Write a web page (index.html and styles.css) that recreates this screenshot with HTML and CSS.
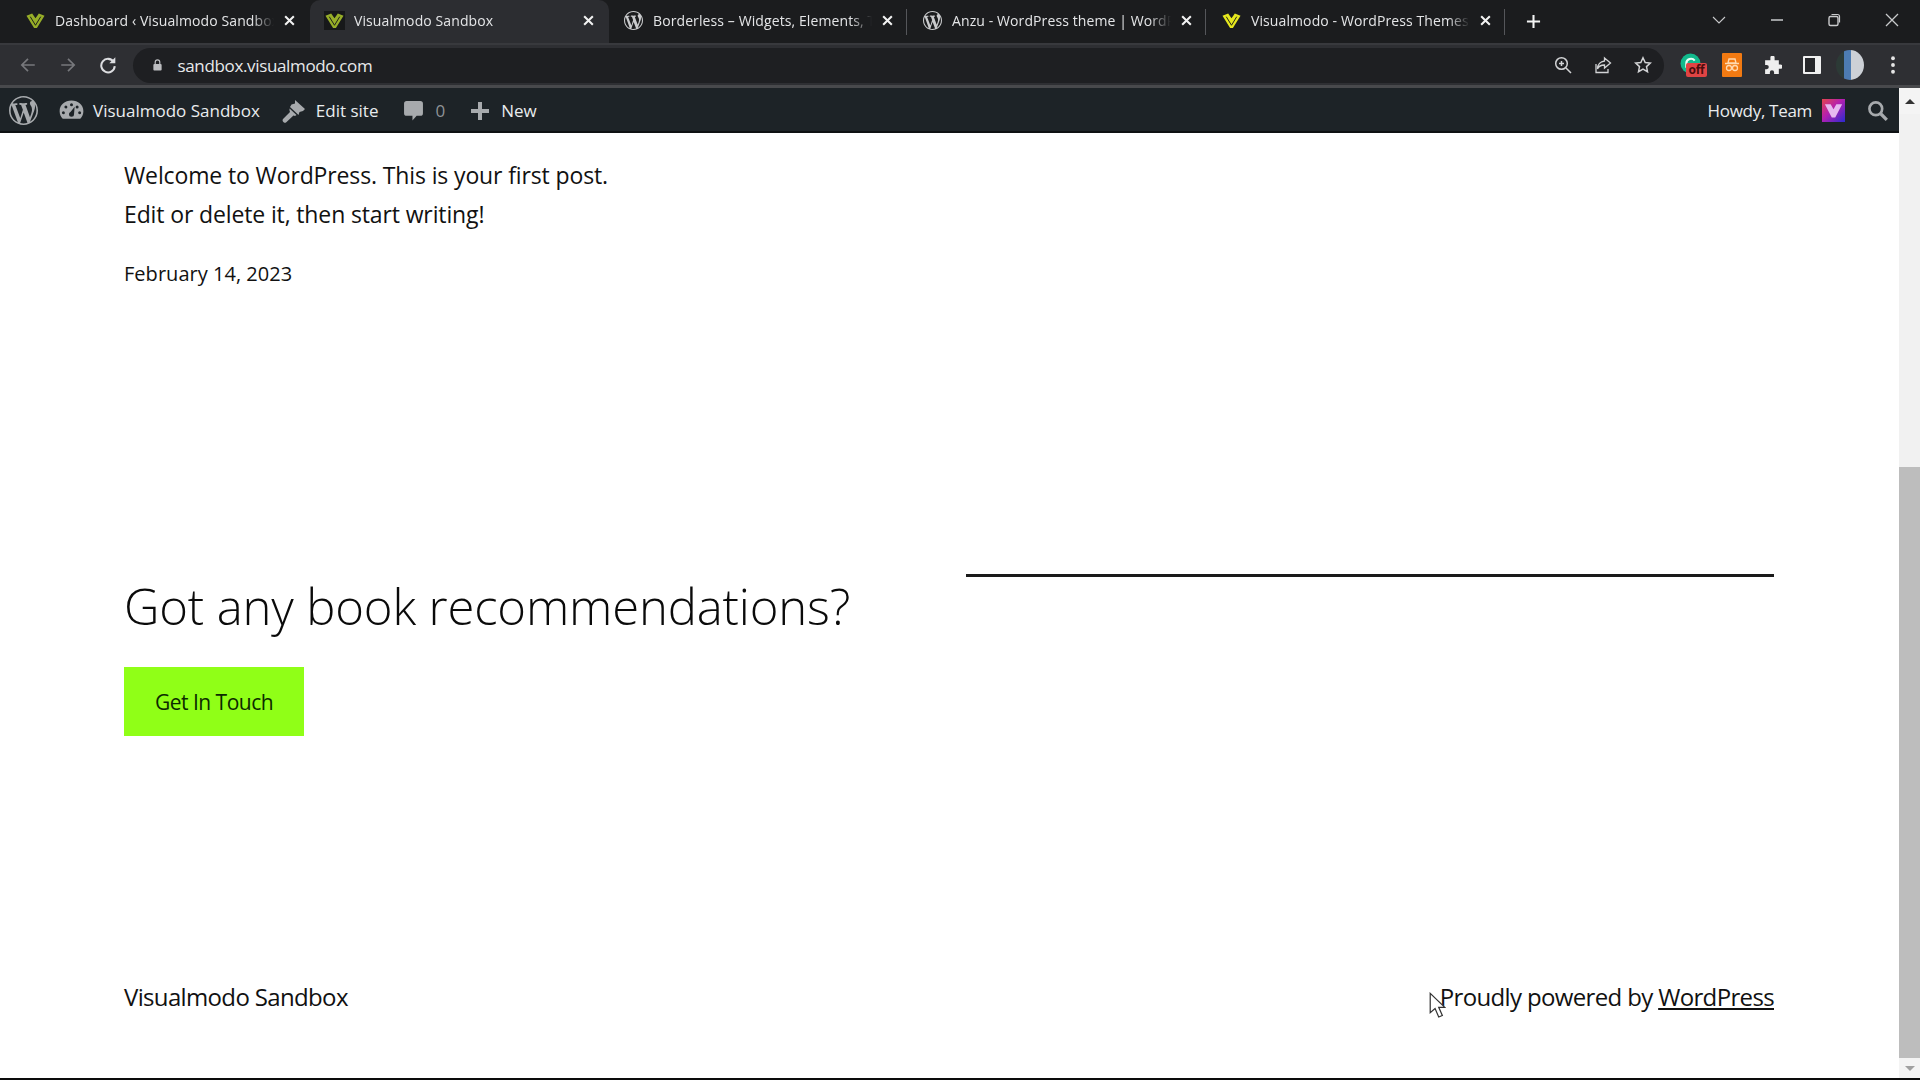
FILE: index.html
```html
<!DOCTYPE html>
<html lang="en">
<head>
<meta charset="utf-8">
<title>Visualmodo Sandbox</title>
<link rel="stylesheet" href="styles.css">
</head>
<body>
<svg class="defs" width="0" height="0" aria-hidden="true">
  <defs>
    <symbol id="wp" viewBox="0 0 20 20"><path d="M20 10c0-5.51-4.49-10-10-10C4.48 0 0 4.49 0 10c0 5.52 4.48 10 10 10 5.51 0 10-4.48 10-10zM7.78 15.37L4.37 6.22c.55-.02 1.17-.08 1.17-.08.5-.06.44-1.13-.06-1.11 0 0-1.45.11-2.37.11-.18 0-.37 0-.58-.01C4.12 2.69 6.87 1.11 10 1.11c2.33 0 4.45.87 6.05 2.34-.68-.11-1.65.39-1.65 1.58 0 .74.45 1.36.9 2.1.35.61.55 1.36.55 2.46 0 1.49-1.4 5-1.4 5l-3.03-8.37c.54-.02.82-.17.82-.17.5-.05.44-1.25-.06-1.22 0 0-1.44.12-2.38.12-.87 0-2.33-.12-2.33-.12-.5-.03-.56 1.2-.06 1.22l.92.08 1.26 3.41zM17.41 10c.24-.64.74-1.87.43-4.25.7 1.29 1.05 2.71 1.05 4.25 0 3.29-1.73 6.24-4.4 7.78.97-2.59 1.94-5.2 2.92-7.78zM6.1 18.09C3.12 16.65 1.11 13.53 1.11 10c0-1.3.23-2.48.72-3.59C3.25 10.3 4.67 14.2 6.1 18.09zm4.03-6.63l2.58 6.98c-.86.29-1.76.45-2.71.45-.79 0-1.57-.11-2.29-.33.81-2.38 1.62-4.74 2.42-7.1z" fill="currentColor"/></symbol>
    <symbol id="vm" viewBox="0 0 20 20"><path d="M0.500 5L6.500 2.500 10 7.500 13.500 2.500 19.500 5 11.500 18H8.500z" fill="currentColor"/><path d="M4.500 6L10 15 15.500 6" stroke="#17181a" stroke-width="1" fill="none"/></symbol>
    <symbol id="close" viewBox="0 0 12 12"><path d="M2 2l8 8M10 2l-8 8" stroke="currentColor" stroke-width="1.9" fill="none"/></symbol>
  </defs>
</svg>

<header class="tabstrip">
  <div class="tab">
    <svg class="favicon fav-olive"><use href="#vm"/></svg>
    <span class="tab-title">Dashboard ‹ Visualmodo Sandbox</span>
    <svg class="tab-close"><use href="#close"/></svg>
  </div>
  <div class="tab tab-active">
    <svg class="favicon fav-olive fav-box"><use href="#vm"/></svg>
    <span class="tab-title">Visualmodo Sandbox</span>
    <svg class="tab-close"><use href="#close"/></svg>
  </div>
  <div class="tab">
    <svg class="favicon fav-wp"><use href="#wp"/></svg>
    <span class="tab-title">Borderless – Widgets, Elements, T</span>
    <svg class="tab-close"><use href="#close"/></svg>
  </div>
  <div class="tab tab-sep">
    <svg class="favicon fav-wp"><use href="#wp"/></svg>
    <span class="tab-title">Anzu - WordPress theme | WordP</span>
    <svg class="tab-close"><use href="#close"/></svg>
  </div>
  <div class="tab tab-sep tab-last">
    <svg class="favicon fav-yellow"><use href="#vm"/></svg>
    <span class="tab-title">Visualmodo - WordPress Themes</span>
    <svg class="tab-close"><use href="#close"/></svg>
  </div>
  <svg class="new-tab" viewBox="0 0 16 16"><path d="M8 1v14M1 8h14" stroke="currentColor" stroke-width="2.200" fill="none"/></svg>
  <div class="window-controls">
    <svg class="win-icon" viewBox="0 0 16 16"><path d="M2 5l6 6 6-6" stroke="currentColor" stroke-width="1.100" fill="none"/></svg>
    <svg class="win-icon" viewBox="0 0 16 16"><path d="M2 8h12" stroke="currentColor" stroke-width="1.500" fill="none"/></svg>
    <svg class="win-icon" viewBox="0 0 16 16"><rect x="3" y="4.500" width="9" height="9" rx="1.500" stroke="currentColor" stroke-width="1.400" fill="none"/><path d="M5.500 2.500h6a2 2 0 0 1 2 2v6" stroke="currentColor" stroke-width="1.200" fill="none"/></svg>
    <svg class="win-icon" viewBox="0 0 16 16"><path d="M2 2l12 12M14 2L2 14" stroke="currentColor" stroke-width="1.300" fill="none"/></svg>
  </div>
</header>

<nav class="toolbar">
  <svg class="tool-icon tool-dim" viewBox="0 0 16 16"><path d="M14 8H2.500M8 2.500L2.500 8 8 13.500" stroke="currentColor" stroke-width="1.500" fill="none"/></svg>
  <svg class="tool-icon tool-dim" viewBox="0 0 16 16"><path d="M2 8h11.500M8 2.500L13.500 8 8 13.500" stroke="currentColor" stroke-width="1.500" fill="none"/></svg>
  <svg class="tool-icon" viewBox="0 0 16 16"><path d="M13 5.200A6 6 0 1 0 14 9" stroke="currentColor" stroke-width="1.800" fill="none"/><path d="M14.500 1.200v5.300H9.200z" fill="currentColor"/></svg>
  <div class="omnibox">
    <svg class="lock" viewBox="0 0 12 14"><path d="M3.500 6V4a2.500 2.500 0 0 1 5 0v2" stroke="currentColor" stroke-width="1.300" fill="none"/><rect x="1.500" y="6" width="9" height="7" rx="1" fill="currentColor"/></svg>
    <span class="url">sandbox.visualmodo.com</span>
    <div class="omni-actions">
      <svg class="omni-icon" viewBox="0 0 18 18"><circle cx="7.500" cy="7.500" r="5.800" stroke="currentColor" stroke-width="1.500" fill="none"/><path d="M12 12l5 5M5 7.500h5M7.500 5v5" stroke="currentColor" stroke-width="1.500" fill="none"/></svg>
      <svg class="omni-icon" viewBox="0 0 18 18"><path d="M10.500 2l6 5-6 5V9C7 9 4.500 10.500 3.500 13c0-4.500 3-7.500 7-8z" stroke="currentColor" stroke-width="1.300" fill="none"/><path d="M2 8v8.500h12V13" stroke="currentColor" stroke-width="1.300" fill="none"/></svg>
      <svg class="omni-icon" viewBox="0 0 18 18"><path d="M9 1.800l2.200 4.700 5.100.6-3.800 3.500 1 5.100L9 13.200l-4.500 2.500 1-5.100-3.800-3.500 5.100-.6z" stroke="currentColor" stroke-width="1.500" fill="none"/></svg>
    </div>
  </div>
  <div class="extensions">
    <div class="ext ext-green">
      <svg class="ext-ring" viewBox="0 0 20 20"><circle cx="10" cy="10" r="9.500" fill="#12b98c"/><path d="M6 14V10a4.500 4.500 0 0 1 8-2.800" stroke="#e6fff6" stroke-width="2" fill="none"/></svg>
      <span class="ext-off">off</span>
    </div>
    <div class="ext ext-orange">
      <svg viewBox="0 0 20 20" class="ext-glyph"><path d="M6 8l1-4h6l1 4zM3 8.500h14" stroke="#ffd9b0" stroke-width="1.400" fill="none"/><circle cx="7" cy="13" r="2.500" stroke="#ffd9b0" stroke-width="1.300" fill="none"/><circle cx="13" cy="13" r="2.500" stroke="#ffd9b0" stroke-width="1.300" fill="none"/></svg>
    </div>
    <svg class="ext-puzzle" viewBox="0 0 18 18"><path d="M7 1.500a2 2 0 0 1 4 0V4h4v4h1.500a2 2 0 0 1 0 4H15v5h-4.500v-1.500a2 2 0 0 0-4 0V17H2v-4.500h1.500a2 2 0 0 0 0-4H2V4h5z" fill="currentColor"/></svg>
    <div class="side-panel"><span class="side-panel-inner"></span></div>
    <div class="avatar"></div>
    <svg class="kebab" viewBox="0 0 4 16"><circle cx="2" cy="2" r="1.700"/><circle cx="2" cy="8" r="1.700"/><circle cx="2" cy="14" r="1.700"/></svg>
  </div>
</nav>

<div class="viewport">
  <div class="page">
    <div class="adminbar">
      <svg class="ab-wp"><use href="#wp"/></svg>
      <svg class="ab-dash" viewBox="0 0 20 20"><path fill-rule="evenodd" d="M3 16.500h14c1.500-1.500 2.500-3.500 2.500-6C19.500 5.500 15.300 2 10 2S.5 5.500.5 10.500c0 2.500 1 4.500 2.500 6zM10 4.200a1.200 1.200 0 1 1 0 2.400 1.200 1.200 0 0 1 0-2.400zM5.500 6a1.200 1.200 0 1 1 0 2.400A1.200 1.200 0 0 1 5.500 6zm9 0a1.200 1.200 0 1 1 0 2.400 1.200 1.200 0 0 1 0-2.400zM3.500 10.500a1.200 1.200 0 1 1 0 2.400 1.200 1.200 0 0 1 0-2.400zm13 0a1.200 1.200 0 1 1 0 2.400 1.200 1.200 0 0 1 0-2.400zM12.500 7l-.5 6a2 2 0 0 1-4 0c0-.8.500-1.500 1.200-1.800z" fill="currentColor"/></svg>
      <span class="ab-text ab-site">Visualmodo Sandbox</span>
      <svg class="ab-brush" viewBox="0 0 26 26"><path d="M14 2l10 9-2 2-3.500 1-1 3L9 9l1.500-2.500L14 5.500z" fill="currentColor"/><path d="M8.500 10.500l7 6.500-1.500 1-1.500-.5-7.500 7c-1.500 1.200-4.500-1.500-3-3.500l7-7-.5-1.500z" fill="currentColor"/></svg>
      <span class="ab-text ab-edit">Edit site</span>
      <svg class="ab-comment" viewBox="0 0 20 20"><path d="M3.500 1h13a2.500 2.500 0 0 1 2.500 2.500v9a2.500 2.500 0 0 1-2.500 2.500H13l-4 4.500V15H3.500A2.500 2.500 0 0 1 1 12.500v-9A2.500 2.500 0 0 1 3.500 1z" fill="currentColor"/></svg>
      <span class="ab-text ab-count">0</span>
      <svg class="ab-plus" viewBox="0 0 20 20"><path d="M8 1h4v7h7v4h-7v7H8v-7H1V8h7z" fill="currentColor"/></svg>
      <span class="ab-text ab-new">New</span>
      <div class="ab-right">
        <span class="ab-text ab-howdy">Howdy, Team</span>
        <div class="ab-avatar"><svg viewBox="0 0 20 20"><path d="M2.500 4.500h5L10 9l2.500-4.500h5L11.500 16h-3z" fill="#e6b8f0"/></svg></div>
        <svg class="ab-search" viewBox="0 0 20 20"><path d="M12.500 12.500l5.500 5.500" stroke="currentColor" stroke-width="3" fill="none"/><circle cx="8" cy="8" r="5.800" stroke="currentColor" stroke-width="2.400" fill="none"/></svg>
      </div>
    </div>

    <main class="content">
      <section class="post">
        <p class="post-text">Welcome to WordPress. This is your first post.<br>Edit or delete it, then start writing!</p>
        <p class="post-date">February 14, 2023</p>
      </section>

      <section class="cta">
        <div class="cta-main">
          <h2 class="cta-title">Got any book recommendations?</h2>
          <a class="cta-button">Get In Touch</a>
        </div>
        <div class="cta-rule"></div>
      </section>

      <footer class="site-footer">
        <span>Visualmodo Sandbox</span>
        <span>Proudly powered by <a class="footer-link">WordPress</a></span>
      </footer>
    </main>

    <svg class="cursor" viewBox="0 0 14 22"><path d="M1 1v16l4-3.500 3 7 3-1.300-3-6.700h5z" fill="#fff" stroke="#333" stroke-width="1"/></svg>
  </div>

  <aside class="scrollbar">
    <div class="sb-button sb-up"><span class="sb-arrow-up"></span></div>
    <div class="sb-track"><div class="sb-thumb"></div></div>
    <div class="sb-button sb-down"><span class="sb-arrow-down"></span></div>
  </aside>
</div>
</body>
</html>
```

FILE: styles.css
```css
* { box-sizing: border-box; }
html, body { margin: 0; height: 100%; }
body {
  width: 1920px;
  height: 1080px;
  overflow: hidden;
  display: flex;
  flex-direction: column;
  background: #000;
  font-family: "Open Sans", "Noto Sans", "Liberation Sans", sans-serif;
  color: #111;
}
.defs { position: absolute; }

/* tab strip */
.tabstrip {
  height: 43px;
  flex: none;
  display: flex;
  align-items: stretch;
  padding: 0 0 0 11px;
  background: #1b1c1e;
  color: #e4e5e7;
}
.tab {
  width: 299px;
  flex: none;
  display: flex;
  align-items: center;
  padding: 0 14px 2px 14px;
  position: relative;
}
.tab-active {
  background: #2c2d31;
  border-radius: 10px 10px 0 0;
}
.tab-sep::before,
.tab-last::after {
  content: "";
  position: absolute;
  left: -2px;
  top: 9px;
  height: 26px;
  width: 1px;
  background: #55565a;
}
.tab-last::after { left: auto; right: 1px; }
.favicon { width: 21px; height: 19px; flex: none; margin-right: -2px; }
.fav-olive { color: #97ae28; }
.fav-box { background: #17181a; }
.fav-wp { color: #c9cacc; }
.fav-yellow { color: #e6e81e; }
.tab-title {
  margin-left: 11px;
  width: 219px;
  flex: none;
  overflow: hidden;
  white-space: nowrap;
  font-size: 14px;
  letter-spacing: 0.1px;
  -webkit-mask-image: linear-gradient(to right, #000 90%, transparent 100%);
  mask-image: linear-gradient(to right, #000 90%, transparent 100%);
}
.tab-close { width: 13px; height: 13px; margin-left: 8.500px; flex: none; color: #f2f2f2; }
.new-tab { width: 15px; height: 15px; margin: 14px 0 0 19.500px; flex: none; color: #f4f4f4; }
.window-controls {
  margin-left: auto;
  display: flex;
  gap: 41.600px;
  align-items: flex-start;
  padding: 12px 20px 0 0;
  color: #c9cacc;
}
.win-icon { width: 16px; height: 16px; flex: none; }

/* toolbar */
.toolbar {
  height: 45px;
  flex: none;
  display: flex;
  align-items: center;
  padding: 0 0 0 19px;
  background: #2e2f33;
  border-top: 2px solid #38393d;
  border-bottom: 3px solid #48494c;
  color: #dcdde0;
}
.tool-icon { width: 18px; height: 18px; flex: none; margin-right: 22px; }
.tool-dim { color: #77787c; }
.omnibox {
  width: 1531px;
  height: 35px;
  margin-left: -6px;
  flex: none;
  display: flex;
  align-items: center;
  padding: 0 12px 0 18.500px;
  background: #1e1f22;
  border-radius: 18px;
}
.lock { width: 11px; height: 14px; color: #bcbdc0; flex: none; }
.url {
  margin-left: 15px;
  font-size: 17px;
  letter-spacing: -0.35px;
  color: #e8e9eb;
}
.omni-actions {
  margin-left: auto;
  display: flex;
  gap: 22px;
  color: #d2d3d5;
}
.omni-icon { width: 18px; height: 18px; flex: none; }
.extensions {
  margin-left: 16px;
  display: flex;
  align-items: center;
  flex: 1;
  position: relative;
}
.ext { width: 24px; height: 24px; flex: none; position: relative; }
.ext-ring { width: 21px; height: 21px; display: block; }
.ext-off {
  position: absolute;
  left: 6px;
  top: 10px;
  width: 21px;
  height: 14px;
  border-radius: 2px;
  background: #e04444;
  color: #4a0d0d;
  font-size: 12px;
  line-height: 13px;
  font-weight: 700;
  text-align: center;
  letter-spacing: -0.3px;
}
.ext-orange {
  margin-left: 18px;
  width: 20px;
  height: 24px;
  background: #f27a12;
  border-radius: 1px;
}
.ext-glyph { width: 20px; height: 24px; display: block; }
.ext-puzzle { width: 19px; height: 19px; margin-left: 21px; color: #eeeeee; flex: none; }
.side-panel {
  width: 18px;
  height: 18px;
  margin-left: 21px;
  background: #f0f0f0;
  border-radius: 1px;
  padding: 2px 6px 2px 2px;
  flex: none;
}
.side-panel-inner { display: block; height: 100%; background: #26272a; }
.avatar {
  width: 28px;
  height: 30px;
  margin-left: 15px;
  border-radius: 50%;
  flex: none;
  background: linear-gradient(90deg, #2c3a36 0 30%, #4d7cb2 30% 52%, #ccd0d6 52% 100%);
}
.kebab { width: 6px; height: 18px; margin-left: 26px; fill: #e6e6e6; flex: none; }

/* viewport */
.viewport {
  flex: 1;
  min-height: 0;
  display: flex;
  border-bottom: 2px solid #0c0c0c;
  background: #fff;
}
.page {
  flex: 1;
  min-width: 0;
  display: flex;
  flex-direction: column;
  position: relative;
  background: #fff;
}

/* admin bar */
.adminbar {
  height: 45px;
  flex: none;
  display: flex;
  align-items: center;
  background: #1d2327;
  border-bottom: 2px solid #0e1113;
  color: #b4b9be;
  padding: 2px 10px 0 9px;
}
.ab-text {
  font-size: 17px;
  letter-spacing: 0;
  color: #e9ecee;
  white-space: nowrap;
}
.ab-howdy { letter-spacing: -0.3px; }
.ab-wp { width: 29px; height: 29px; flex: none; color: #a7aaad; }
.ab-dash { width: 25px; height: 25px; margin-left: 21px; flex: none; color: #a7aaad; }
.ab-site { margin-left: 9px; }
.ab-brush { width: 26px; height: 26px; margin-left: 21px; flex: none; color: #a7aaad; }
.ab-edit { margin-left: 9px; }
.ab-comment { width: 21px; height: 21px; margin-left: 25px; flex: none; color: #a7aaad; }
.ab-count { margin-left: 11px; color: #8e9296; }
.ab-plus { width: 20px; height: 20px; margin-left: 25px; flex: none; color: #a7aaad; }
.ab-new { margin-left: 11px; }
.ab-right { margin-left: auto; display: flex; align-items: center; }
.ab-avatar {
  width: 23px;
  height: 23px;
  margin-left: 10px;
  background: linear-gradient(135deg, #e2454d 0%, #b51fb0 45%, #2a2ad0 100%);
  flex: none;
}
.ab-avatar svg { display: block; }
.ab-search { width: 22px; height: 22px; margin-left: 22px; flex: none; color: #a7aaad; }

/* page content */
.content {
  flex: 1;
  padding: 23px 125px 0 124px;
  color: #111;
}
.post-text {
  margin: 0;
  font-size: 23px;
  line-height: 39px;
  letter-spacing: -0.13px;
}
.post-date {
  margin: 25px 0 0;
  font-size: 20px;
  line-height: 30px;
  letter-spacing: 0.03px;
}
.cta {
  margin-top: 283px;
  display: flex;
  justify-content: space-between;
  align-items: flex-start;
}
.cta-title {
  margin: 0;
  font-size: 49px;
  font-weight: 300;
  line-height: 68px;
  letter-spacing: -0.15px;
  color: #0a0a0a;
}
.cta-button {
  display: flex;
  align-items: center;
  justify-content: center;
  width: 180px;
  height: 69px;
  margin-top: 27px;
  background: #90ff17;
  color: #0c2a00;
  font-size: 21px;
  letter-spacing: -0.5px;
}
.cta-rule {
  width: 808px;
  margin-top: 2px;
  border-top: 3px solid #1a1a1a;
}
.site-footer {
  margin-top: 244px;
  display: flex;
  justify-content: space-between;
  font-size: 24px;
  line-height: 34px;
  letter-spacing: -0.65px;
  color: #111;
}
.footer-link { text-decoration: underline; }
.cursor {
  position: absolute;
  left: 1429px;
  top: 904px;
  width: 17px;
  height: 27px;
}

/* scrollbar */
.scrollbar {
  width: 21px;
  flex: none;
  display: flex;
  flex-direction: column;
  background: #f1f1f1;
}
.sb-button {
  height: 20px;
  flex: none;
  display: flex;
  align-items: center;
  justify-content: center;
  background: #f4f4f4;
}
.sb-up { height: 26px; }
.sb-arrow-up {
  width: 0;
  height: 0;
  border: 5px solid transparent;
  border-top: 0;
  border-bottom: 5px solid #333;
}
.sb-arrow-down {
  width: 0;
  height: 0;
  border: 5px solid transparent;
  border-bottom: 0;
  border-top: 5px solid #a0a0a0;
}
.sb-track { flex: 1; display: flex; flex-direction: column; justify-content: flex-end; }
.sb-thumb { height: 591px; background: #bdbdbd; }
```
